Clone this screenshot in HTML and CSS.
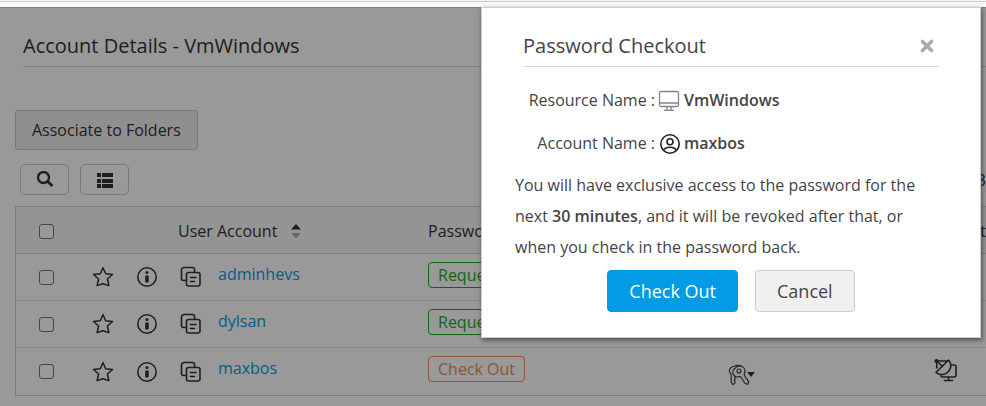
FILE: index.html
```html
<!DOCTYPE html>
<html lang="en">
<head>
<meta charset="utf-8">
<title>Account Details</title>
<link rel="stylesheet" href="styles.css">
</head>
<body>
<svg class="sprite" aria-hidden="true">
  <symbol id="star" viewBox="0 0 22 22"><path d="M11 1.800l2.700 6 6.800.7-5.100 4.500 1.500 6.600L11 17.800l-5.900 1.800L6.600 13 1.500 8.500l6.800-.7z" fill="none" stroke="currentColor" stroke-width="1.500" stroke-linejoin="round"/></symbol>
  <symbol id="info" viewBox="0 0 22 22"><circle cx="11" cy="11" r="9.200" fill="none" stroke="currentColor" stroke-width="1.500"/><circle cx="11" cy="6.500" r="1.500" fill="currentColor"/><rect x="9.200" y="9.500" width="3.500" height="7" rx=".8" fill="currentColor"/></symbol>
  <symbol id="copy" viewBox="0 0 22 22"><g fill="none" stroke="currentColor" stroke-width="1.600" stroke-linecap="round"><path d="M5.500 14.500H3.500a2 2 0 0 1-2-2V4A2.500 2.500 0 0 1 4 1.500h8.500a2 2 0 0 1 2 2v2"/><rect x="6.500" y="6.500" width="13.500" height="13.500" rx="2"/><path d="M10.500 11.500h5.500M10.500 15.500h4"/></g></symbol>
  <symbol id="keys" viewBox="0 0 22 22"><g fill="none" stroke="currentColor" stroke-width="1.100" stroke-linejoin="round"><path d="M6.500 2.500a4.500 4.500 0 0 0-3.300 8v8L5 20.700l2-1.900v-1.500l-.8-1 .8-1v-3.500M6.500 2.500c1.500-1.500 4-1.500 6-.3"/><path d="M7.500 4a4.500 4.500 0 0 0 4 8.500l1.500.5 4 6.500 3 .6.700-2.600-1.200-.9.100-1.300-1.400-.5-2.200-4.600A5 5 0 0 0 7.500 4z"/><circle cx="11" cy="7" r="2"/></g></symbol>
  <symbol id="remote" viewBox="0 0 24 24"><g fill="none" stroke="currentColor" stroke-width="1.600" stroke-linejoin="round" stroke-linecap="round"><path d="M2.500 3.500L3 10M3 3h9.500M3 3l5.500 5.500"/><path d="M14.500 2L2 14.500c4 3.500 10 2.500 13-1.500 2.500-3.500 2.500-7.500-.5-11z"/><path d="M17.500 7H20a2 2 0 0 1 2 2v8a2 2 0 0 1-2 2H8.500a2 2 0 0 1-1.500-1M14.500 19v3M10.500 22.500h8"/></g><circle cx="2.500" cy="3" r="2.100" fill="currentColor"/></symbol>
</svg>

<div class="topbar"></div>
<div class="stage">
  <main class="page">
    <h1 class="page-title">Account Details - VmWindows</h1>
    <button class="folder-button" type="button">Associate to Folders</button>
    <div class="toolbar">
      <button class="tool" type="button" aria-label="Search"><svg width="18" height="18" viewBox="0 0 18 18"><circle cx="7.500" cy="6.500" r="5.500" fill="none" stroke="currentColor" stroke-width="2.300"/><path d="M11.500 10.500l5 4.500" stroke="currentColor" stroke-width="3"/></svg></button>
      <button class="tool" type="button" aria-label="Columns"><svg width="18" height="18" viewBox="0 0 18 18"><path d="M1 2h4v4H1zM6 2H17v4H6zM1 8h4v4H1zM6 8H17v4H6zM1 13h4v4H1zM6 13H17v4H6z" fill="currentColor"/></svg></button>
      <span class="count">3</span>
    </div>
    <table class="accounts">
      <colgroup><col class="c-check"><col class="c-star"><col class="c-info"><col class="c-user"><col class="c-pass"><col class="c-keys"><col class="c-remote"></colgroup>
      <thead>
        <tr>
          <th class="check"><input type="checkbox" aria-label="Select all"></th><th></th><th></th>
          <th><span class="sort">User Account <svg width="10" height="14" viewBox="0 0 10 14"><path d="M0 5.500L5 0l5 5.500z" fill="currentColor"/><path class="sort-down" d="M0 9l5 5 5-5z"/></svg></span></th>
          <th>Password</th><th></th><th class="end">Connect</th>
        </tr>
      </thead>
      <tbody>
        <tr>
          <td class="check"><input type="checkbox" aria-label="Select adminhevs"></td>
          <td class="center"><svg class="icon"><use href="#star"/></svg></td>
          <td class="center"><svg class="icon"><use href="#info"/></svg></td>
          <td><div class="user"><svg class="icon"><use href="#copy"/></svg><a href="#adminhevs">adminhevs</a></div></td>
          <td><button class="badge request" type="button">Request</button></td>
          <td><div class="keys"><svg class="icon"><use href="#keys"/></svg><i class="caret"></i></div></td>
          <td><svg class="remote"><use href="#remote"/></svg></td>
        </tr>
        <tr>
          <td class="check"><input type="checkbox" aria-label="Select dylsan"></td>
          <td class="center"><svg class="icon"><use href="#star"/></svg></td>
          <td class="center"><svg class="icon"><use href="#info"/></svg></td>
          <td><div class="user"><svg class="icon"><use href="#copy"/></svg><a href="#dylsan">dylsan</a></div></td>
          <td><button class="badge request" type="button">Request</button></td>
          <td><div class="keys"><svg class="icon"><use href="#keys"/></svg><i class="caret"></i></div></td>
          <td><svg class="remote"><use href="#remote"/></svg></td>
        </tr>
        <tr>
          <td class="check"><input type="checkbox" aria-label="Select maxbos"></td>
          <td class="center"><svg class="icon"><use href="#star"/></svg></td>
          <td class="center"><svg class="icon"><use href="#info"/></svg></td>
          <td><div class="user"><svg class="icon"><use href="#copy"/></svg><a href="#maxbos">maxbos</a></div></td>
          <td><button class="badge checkout" type="button">Check Out</button></td>
          <td><div class="keys"><svg class="icon"><use href="#keys"/></svg><i class="caret"></i></div></td>
          <td><svg class="remote"><use href="#remote"/></svg></td>
        </tr>
      </tbody>
    </table>
  </main>
  <div class="overlay"></div>
  <section class="dialog" role="dialog" aria-labelledby="dialog-title">
    <header class="dialog-head">
      <h2 id="dialog-title">Password Checkout</h2>
      <button class="close" type="button" aria-label="Close"><svg width="14" height="14" viewBox="0 0 14 14"><path d="M2.500 2.500l9 9M11.500 2.500l-9 9" stroke="currentColor" stroke-width="3.600" stroke-linecap="round"/></svg></button>
    </header>
    <dl class="facts">
      <dt>Resource Name :</dt>
      <dd><svg width="22" height="22" viewBox="0 0 22 22"><g fill="none" stroke="#858585" stroke-width="1.300"><rect x="1.500" y="2.500" width="19" height="15" rx="1.500"/><path d="M1.500 14h19M9 18v3M13 18v3M6 21.300h10"/></g></svg><b>VmWindows</b></dd>
      <dt>Account Name :</dt>
      <dd><svg width="22" height="22" viewBox="0 0 22 22"><g fill="none" stroke="#222" stroke-width="1.600"><circle cx="12" cy="12" r="9.200"/><circle cx="12" cy="9.700" r="3"/><path d="M5.500 18.300c1.500-2.500 3.800-3 6.500-3s5 .5 6.500 3"/></g></svg><b>maxbos</b></dd>
    </dl>
    <p class="note">You will have exclusive access to the password for the next <b>30 minutes</b>, and it will be revoked after that, or when you check in the password back.</p>
    <div class="actions">
      <button class="primary" type="button">Check Out</button>
      <button class="secondary" type="button">Cancel</button>
    </div>
  </section>
</div>
</body>
</html>
```
FILE: styles.css
```css
* { box-sizing: border-box; }
body { margin: 0; font: 16px/24px "Open Sans", "Noto Sans", sans-serif; color: #333; overflow: hidden; }
button { font: inherit; color: inherit; cursor: pointer; }
svg { display: block; flex: none; }
.sprite { position: absolute; width: 0; height: 0; }
.topbar { height: 7px; background: #f8f9f9; border-top: 1px solid #f5f5f5; box-shadow: inset 0 1px #ccc; }
.stage { position: relative; min-height: calc(100vh - 7px); background: #fff; }
.page { padding: 24px 0 11px 15px; }
.page-title { margin: 0 0 43px 8px; height: 36px; font-size: 20px; line-height: 30px; font-weight: 400; border-bottom: 1px solid #d5d5d5; }
.folder-button { display: block; height: 40px; padding: 0 16px; background: #efefef; border: 1px solid #c8c8c8; border-radius: 3px; }
.toolbar { display: flex; align-items: center; gap: 11px; margin: 14px 0 11px 5px; }
.tool { display: flex; align-items: center; justify-content: center; width: 49px; height: 31px; padding: 0; background: #fff; border: 1px solid #c8c8c8; border-radius: 5px; }
.count { margin-left: auto; }
.accounts { width: 100%; table-layout: fixed; border-collapse: separate; border-spacing: 0; border: 1px solid #d0d0d0; border-right: 0; }
.c-check { width: 62px; }
.c-star { width: 50px; }
.c-info { width: 38px; }
.c-user { width: 250px; }
.c-pass { width: 300px; }
.c-keys { width: 206px; }
th, td { height: 47px; padding: 0 0 0 12px; text-align: left; vertical-align: middle; font-weight: 400; border-bottom: 1px solid #e2e2e2; }
th { padding-top: 2px; background: #f7f7f7; border-color: #d0d0d0; }
tr:last-child td { border-bottom: 0; }
th.check, td.check { padding-left: 23px; }
td.center { padding: 0; }
.center .icon { margin: 0 auto; }
th.end { padding-left: 0; text-align: right; }
input[type="checkbox"] { appearance: none; display: block; width: 15px; height: 15px; margin: 0; border: 1px solid #767676; border-radius: 3px; background: #fff; }
.icon { width: 22px; height: 22px; }
.sort { display: flex; align-items: center; gap: 14px; }
.sort-down { fill: #aaa; }
.user { display: flex; align-items: center; gap: 16px; padding-left: 2px; }
.user a { margin-bottom: 7px; color: #009ee8; text-decoration: none; }
.badge { display: block; height: 26px; margin-bottom: 5px; padding: 0 9px; line-height: 24px; background: none; border: 1px solid; border-radius: 4px; }
.request { color: #21a81f; }
.checkout { color: #f58a58; }
.keys { display: flex; align-items: center; padding-top: 6px; }
.keys .icon { margin-right: -3px; }
.caret { border: 4px solid transparent; border-top: 5px solid #333; border-bottom: 0; }
.remote { width: 24px; height: 24px; margin-bottom: 3px; }
.overlay { position: absolute; inset: 0; background: rgba(0, 0, 0, .4); box-shadow: inset 0 1px rgba(0, 0, 0, .15); }
.dialog { position: absolute; top: 0; right: 5px; width: 500px; padding: 24px 33px 25px; background: #fff; border: 1px solid #ccc; box-shadow: 1px 2px 5px rgba(0, 0, 0, .5); color: #444; }
.dialog-head { display: flex; justify-content: space-between; height: 35px; margin: 0 8px 21px; border-bottom: 1px solid #d5d5d5; }
.dialog-head h2 { margin: 0; font-size: 20px; line-height: 28px; font-weight: 400; }
.close { height: 28px; padding: 0 5px; border: 0; background: none; color: #aaa; }
.facts { display: grid; grid-template-columns: 140px 1fr; row-gap: 19px; margin: 0 0 15px; }
.facts dt { text-align: right; }
.facts dd { display: flex; align-items: center; gap: 4px; margin: 0 0 0 3px; }
b { font-weight: 600; }
.note { margin: 0; line-height: 31px; }
.actions { display: flex; justify-content: center; gap: 17px; margin-top: 7px; font-size: 18px; }
.actions button { height: 42px; padding: 0 21px; border: 1px solid #ccc; border-radius: 4px; }
.actions .primary { background: #039be5; border-color: #039be5; color: #fff; }
.actions .secondary { background: #f0f0f0; }
```
